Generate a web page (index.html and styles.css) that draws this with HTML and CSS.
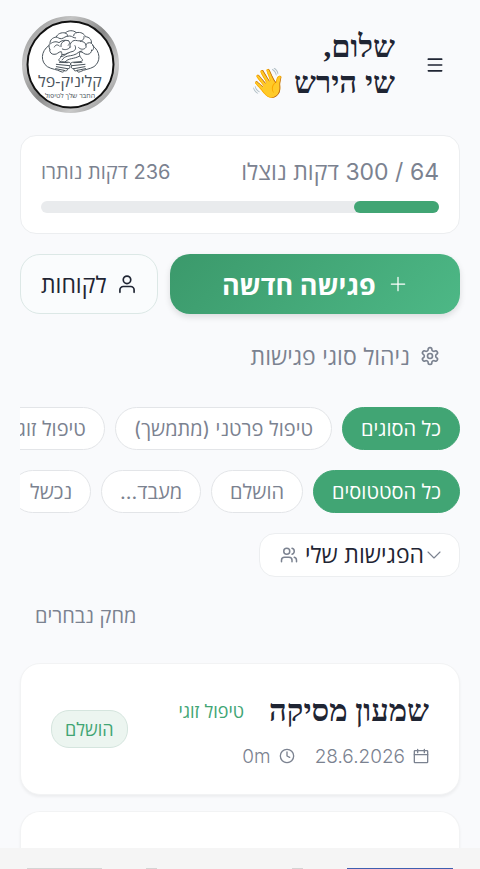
FILE: index.html
```html
<!DOCTYPE html>
<html lang="he" dir="rtl">
<head>
    <meta charset="UTF-8">
    <meta name="viewport" content="width=device-width, initial-scale=1.0">
    <title>קליניק-פל</title>
    <link rel="stylesheet" href="styles.css">
</head>
<body>
    <div class="app">
        <header class="header">
            <button class="menu-btn" type="button" aria-label="תפריט">
                <svg class="icon" width="20" height="20" viewBox="0 0 24 24"><path d="M4 5h16M4 12h16M4 19h16"/></svg>
            </button>
            <h1>שלום,<br>שי הירש <span class="wave">👋</span></h1>
            <svg class="logo" viewBox="0 0 97 97" role="img" aria-label="קליניק-פל">
                <defs>
                    <linearGradient id="ring" x1="0" y1="0" x2="1" y2="1">
                        <stop offset="0" stop-color="#8c8c8c"/>
                        <stop offset=".25" stop-color="#c4c4c4"/>
                        <stop offset=".5" stop-color="#888"/>
                        <stop offset=".75" stop-color="#cacaca"/>
                        <stop offset="1" stop-color="#858585"/>
                    </linearGradient>
                </defs>
                <circle cx="48.500" cy="48.500" r="46" fill="#fff" stroke="url(#ring)" stroke-width="5"/>
                <circle cx="48.500" cy="48.500" r="43" fill="#fff" stroke="#111" stroke-width="2"/>
                <g transform="translate(-7 -6) scale(.3333)" fill="none" stroke="#4a545c" stroke-width="3" stroke-linecap="round" stroke-linejoin="round">
                    <!-- מוח -->
                    <path d="M105 119c-5-8-3-16 0-19 0-10 7-17 19-19 3-9 15-15 27-12 9-9 24-9 33-1 13-3 24 3 27 12 12 1 20 9 18 20 8 6 9 14 4 21"/>
                    <path d="M107 101c8-7 18-7 25-3 7-7 18-9 28-6M124 81c6 1 8 6 16 5 8-2 10-8 24-8 8 0 10 6 18 6M151 69c6 2 7 5 6 9M184 68c-5 1-8 5-8 9M160 92c5 2 5 9 0 14M150 92c-10 4-13 10-12 18M118 111c4-8 10-8 15-3M165 112c-2-13 8-24 22-20 13 2 21-1 20-12M196 94c12 0 19 7 17 18-6 8-16 7-22 1M229 99c-9-3-15 1-17 6M180 107c4 6 2 14-6 17-13 2-18 10-32 10M142 117c8 4 18 2 24-6M141 150c8-14 23-11 35-15 13-3 14-12 25-12M150 156c10-13 28-8 44-18M137 140c14-2 16-9 22-11"/>
                    <!-- ידיים -->
                    <path d="M101 107c-24 17-25 48-4 63 13 8 29 8 41 15 6 3 10 1 9-4 6 4 12 1 10-5 8 1 10-5 6-9 6-1 6-9-1-10l-23-2c-6-1-9-3-7-7 7-7 11-14 7-23-10 0-11 9-22 8-8 0-13-6-13-13"/>
                    <path d="M124 163l39 4M124 170l33 6M122 176l25 5M133 157l24 1"/>
                    <path d="M233 107c24 17 25 48 4 63-13 8-29 8-41 15-6 3-10 1-9-4-6 4-12 1-10-5-8 1-10-5-6-9-6-1-6-9 1-10l23-2c6-1 9-3 7-7-7-7-11-14-7-23 10 0 11 9 22 8 8 0 13-6 13-13"/>
                    <path d="M210 163l-39 4M210 170l-33 6M212 176l-25 5M201 157l-24 1"/>
                </g>
                <text class="logo-name" x="48" y="71" text-anchor="middle">קליניק-פל</text>
                <text class="logo-sub" x="48" y="82" text-anchor="middle">החבר שלך לטיפול</text>
            </svg>
        </header>

        <!-- מכסת דקות -->
        <section class="usage">
            <div class="usage-text">
                <span class="used">64 / 300 דקות נוצלו</span>
                <span class="left">236 דקות נותרו</span>
            </div>
            <div class="bar"><div class="bar-fill" style="width: 21.33%"></div></div>
        </section>

        <div class="actions">
            <button class="btn-new" type="button">
                <svg class="icon icon-thin" width="20" height="20" viewBox="0 0 24 24"><path d="M4 12h16M12 4v16"/></svg>
                פגישה חדשה
            </button>
            <button class="btn-clients" type="button">
                <svg class="icon" width="20" height="20" viewBox="0 0 24 24"><circle cx="12" cy="7" r="4.500"/><path d="M3.500 22v-3a4 4 0 0 1 4-4h9a4 4 0 0 1 4 4v3"/></svg>
                לקוחות
            </button>
        </div>

        <a class="manage" href="#">
            <svg class="icon" width="20" height="20" viewBox="0 0 24 24"><path d="M12.220 2h-.44a2 2 0 0 0-2 2v.18a2 2 0 0 1-1 1.730l-.43.25a2 2 0 0 1-2 0l-.15-.08a2 2 0 0 0-2.730.73l-.22.38a2 2 0 0 0 .73 2.730l.15.1a2 2 0 0 1 1 1.720v.51a2 2 0 0 1-1 1.740l-.15.09a2 2 0 0 0-.73 2.730l.22.38a2 2 0 0 0 2.730.73l.15-.08a2 2 0 0 1 2 0l.43.25a2 2 0 0 1 1 1.730V20a2 2 0 0 0 2 2h.44a2 2 0 0 0 2-2v-.18a2 2 0 0 1 1-1.730l.43-.25a2 2 0 0 1 2 0l.15.08a2 2 0 0 0 2.730-.73l.22-.39a2 2 0 0 0-.73-2.730l-.15-.08a2 2 0 0 1-1-1.740v-.5a2 2 0 0 1 1-1.740l.15-.09a2 2 0 0 0 .73-2.730l-.22-.38a2 2 0 0 0-2.730-.73l-.15.08a2 2 0 0 1-2 0l-.43-.25a2 2 0 0 1-1-1.730V4a2 2 0 0 0-2-2z"/><circle cx="12" cy="12" r="3"/></svg>
            ניהול סוגי פגישות
        </a>

        <!-- סינון -->
        <div class="chips">
            <button class="chip active" type="button">כל הסוגים</button>
            <button class="chip" type="button">טיפול פרטני (מתמשך)</button>
            <button class="chip" type="button">טיפול זוגי</button>
        </div>
        <div class="chips">
            <button class="chip active" type="button">כל הסטטוסים</button>
            <button class="chip" type="button">הושלם</button>
            <button class="chip" type="button">מעבד...</button>
            <button class="chip" type="button">נכשל</button>
        </div>

        <div class="owner">
            <svg class="icon icon-thin" width="18" height="18" viewBox="0 0 24 24"><path d="M4 8l8 8 8-8"/></svg>
            <select aria-label="הצגת פגישות">
                <option>הפגישות שלי</option>
            </select>
            <svg class="icon" width="18" height="18" viewBox="0 0 24 24"><path d="M16 21v-2a4 4 0 0 0-4-4H6a4 4 0 0 0-4 4v2M22 21v-2a4 4 0 0 0-3-3.870M16 3.130a4 4 0 0 1 0 7.750"/><circle cx="9" cy="7" r="4"/></svg>
        </div>

        <button class="delete-btn" type="button">מחק נבחרים</button>

        <!-- רשימת פגישות -->
        <article class="card">
            <div class="card-info">
                <div class="card-title">
                    <h2>שמעון מסיקה</h2>
                    <span class="type">טיפול זוגי</span>
                </div>
                <div class="card-meta">
                    <span><svg class="icon" width="16" height="16" viewBox="0 0 24 24"><rect x="2" y="4" width="20" height="18" rx="1"/><path d="M7 2v5M17 2v5M2 10h20"/></svg>28.6.2026</span>
                    <span><svg class="icon" width="16" height="16" viewBox="0 0 24 24"><circle cx="12" cy="12" r="10"/><path d="M12 6v6l4 2"/></svg>0m</span>
                </div>
            </div>
            <span class="status">הושלם</span>
        </article>
        <article class="card card-next"></article>
    </div>

    <div class="bottom-bar">
        <div class="tabs">
            <span class="tab tab-main"></span>
            <span class="tab tab-dot"></span>
        </div>
        <div class="tabs">
            <span class="tab tab-dot"></span>
            <span class="tab"></span>
        </div>
    </div>
</body>
</html>
```
FILE: styles.css
```css
* {
    box-sizing: border-box;
}

body {
    margin: 0;
    background-color: #f9fafc;
    color: #1f2533;
    font-family: Inter, "Open Sans", sans-serif;
}

button, select {
    font-family: inherit;
    color: inherit;
    cursor: pointer;
}

.icon {
    flex: none;
    fill: none;
    stroke: currentColor;
    stroke-width: 2;
    stroke-linecap: round;
    stroke-linejoin: round;
}

.icon-thin {
    stroke-width: 1.5;
}

.app {
    display: flex;
    flex-direction: column;
    min-height: 100vh;
    padding: 16px 20px 0;
}

.header {
    display: flex;
    align-items: center;
    gap: 15px;
    margin-bottom: 22px;
}

.menu-btn {
    display: flex;
    align-items: center;
    justify-content: center;
    width: 50px;
    height: 50px;
    padding: 0;
    border: none;
    background: none;
}

h1, h2 {
    margin: 0;
    font-family: "Liberation Serif", serif;
    font-size: 31px;
    font-weight: bold;
}

h1 {
    line-height: 36px;
}

.wave {
    font-size: 29px;
}

.logo {
    width: 97px;
    height: 97px;
    margin-right: auto;
    margin-left: 2px;
}

.logo text {
    font-family: "Open Sans", sans-serif;
    fill: #4a545c;
}

.logo-name {
    font-size: 16px;
}

.logo-sub {
    font-size: 7px;
}

.usage {
    padding: 20px;
    border: 1px solid #eceef0;
    border-radius: 16px;
    background: white;
}

.usage-text {
    display: flex;
    align-items: center;
    justify-content: space-between;
    height: 30px;
    margin-bottom: 15px;
    color: #7b8290;
    white-space: nowrap;
}

.used {
    font-size: 23px;
}

.left {
    font-size: 20px;
}

.bar {
    height: 12px;
    border-radius: 6px;
    background-color: #e9ebed;
}

.bar-fill {
    height: 100%;
    border-radius: 6px;
    background-color: #41a574;
}

.actions {
    display: flex;
    gap: 12px;
    margin-top: 20px;
}

.actions button {
    display: flex;
    align-items: center;
    justify-content: center;
    height: 60px;
    border-radius: 20px;
    white-space: nowrap;
}

.btn-new {
    flex: 1;
    gap: 12px;
    border: none;
    background: linear-gradient(135deg, #3b996b, #4db886);
    box-shadow: 0 3px 6px rgba(0, 0, 0, 0.12);
    font-size: 27px;
    font-weight: bold;
}

.actions .btn-new {
    color: white;
}

.btn-clients {
    gap: 10px;
    padding: 0 20px;
    border: 1px solid #dce8e6;
    background: #fafcfd;
    font-size: 23px;
}

.manage {
    display: flex;
    align-items: center;
    align-self: flex-start;
    gap: 10px;
    height: 44px;
    margin: 20px 20px 0;
    color: #7b8290;
    font-size: 23px;
    text-decoration: none;
}

.chips {
    display: flex;
    gap: 10px;
    margin-top: 20px;
    overflow: hidden;
}

.manage + .chips {
    margin-top: 29px;
}

.chip {
    flex: none;
    height: 43px;
    padding: 0 18px;
    border: 1px solid #e3e5e8;
    border-radius: 22px;
    background: white;
    color: #7b8290;
    font-size: 20px;
}

.chip.active {
    border-color: #41a574;
    background-color: #41a574;
    color: white;
}

.owner {
    display: flex;
    align-items: center;
    align-self: flex-start;
    height: 44px;
    margin-top: 20px;
    padding: 0 16px 0 20px;
    border: 1px solid #eceef0;
    border-radius: 16px;
    background: white;
    color: #7b8290;
}

.owner select {
    margin: 0 1px 0 6px;
    padding: 0;
    border: none;
    background: none;
    appearance: none;
    color: #1f2533;
    font-size: 23px;
}

.delete-btn {
    align-self: flex-end;
    height: 44px;
    margin: 16px 0 26px 15px;
    padding: 0;
    border: none;
    background: none;
    color: #7b8290;
    font-size: 20px;
}

.card {
    display: flex;
    align-items: center;
    justify-content: space-between;
    min-height: 132px;
    margin-bottom: 16px;
    padding: 20px 30px;
    border: 1px solid #f2f3f4;
    border-radius: 20px;
    background: white;
    box-shadow: 0 2px 3px rgba(0, 0, 0, 0.05);
}

.card-title {
    display: flex;
    align-items: center;
    gap: 25px;
    height: 40px;
}

.type {
    color: #41a574;
    font-size: 18px;
}

.card-meta {
    display: flex;
    gap: 20px;
    margin-top: 14px;
    color: #7b8290;
    font-size: 19px;
    font-weight: 300;
}

.card-meta span {
    display: flex;
    align-items: center;
    gap: 8px;
}

.status {
    padding: 6px 13px;
    border: 1px solid #d5e5de;
    border-radius: 18px;
    background-color: #ecf5f0;
    color: #41a574;
    font-size: 18px;
}

.card-next {
    flex: 1;
    min-height: 0;
    margin-bottom: 0;
    border-bottom: none;
    border-radius: 20px 20px 0 0;
}

/* סרגל תחתון */
.bottom-bar {
    position: fixed;
    right: 0;
    bottom: 0;
    left: 0;
    display: flex;
    justify-content: space-between;
    height: 21px;
    padding: 20px 27px 0;
    overflow: hidden;
    background-color: #f5f5f5;
}

.tabs {
    display: flex;
    gap: 44px;
}

.tab {
    width: 75px;
    height: 40px;
    background-color: #d4d4d4;
}

.tab-dot {
    width: 11px;
}

.tab-main {
    width: 106px;
    background-color: #3f5fb0;
}
```
